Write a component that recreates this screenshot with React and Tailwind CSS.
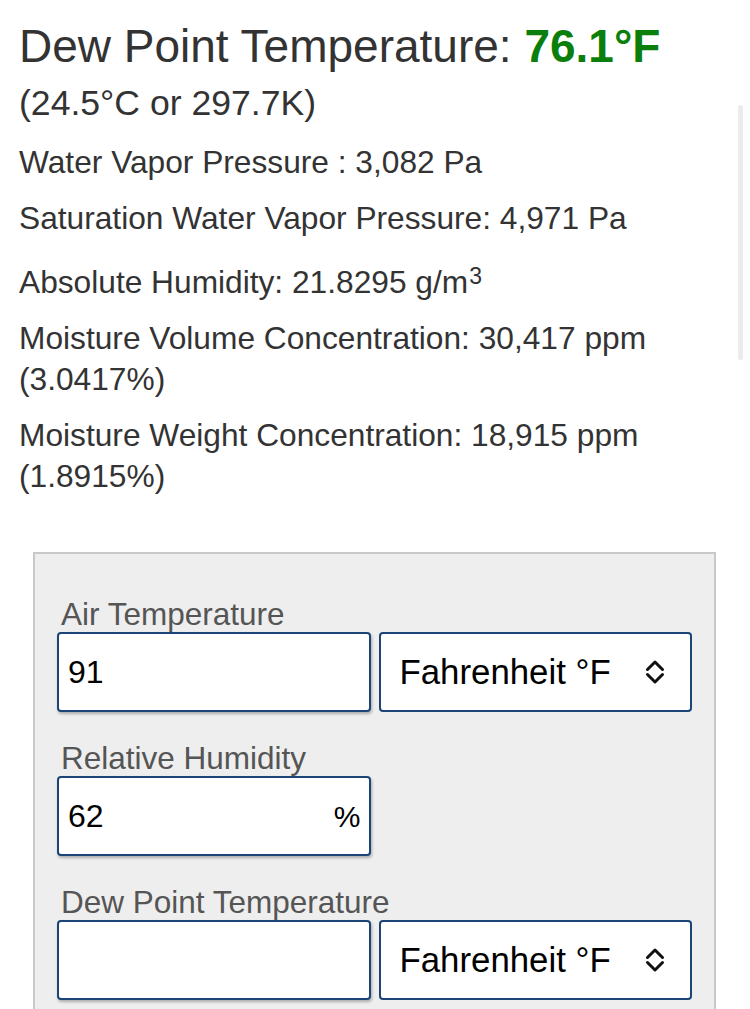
import React from "react";

function Chevrons() {
  return (
    <svg className="shrink-0" width="20" height="26" viewBox="0 0 20 26" fill="none" stroke="#111" strokeWidth="3" strokeLinecap="round" strokeLinejoin="round">
      <path d="M2.5 10.5 L10 3 L17.5 10.5" />
      <path d="M2.5 15.5 L10 23 L17.5 15.5" />
    </svg>
  );
}

function NumInput({ value, suffix }) {
  return (
    <div className="h-[80px] rounded-[4px] border-2 border-[#1b4577] bg-white shadow-[1px_2px_3px_rgba(0,0,0,0.28)] flex items-center pl-[9px] pr-[8px] text-[32px] text-black">
      <span className="flex-1">{value}</span>
      {suffix && <span className="text-[30px]">{suffix}</span>}
    </div>
  );
}

function SelectBox() {
  return (
    <div className="h-[80px] rounded-[4px] border-2 border-[#1b4577] bg-white flex items-center pl-[19px] pr-[25px] text-[34.8px] text-black">
      <span className="flex-1">Fahrenheit °F</span>
      <Chevrons />
    </div>
  );
}

function Label({ children }) {
  return (
    <div className="text-[31.5px] leading-[35px] text-[#555] pl-[4px]">{children}</div>
  );
}

export default function App() {
  return (
    <div className="relative min-h-[1009px] h-[1009px] overflow-hidden bg-white font-['Liberation_Sans',Arial,sans-serif] text-[#333]">
      <div className="px-[19px] pt-[20px]">
        <h1 className="text-[46px] leading-[52px] font-normal">
          Dew Point Temperature: <span className="font-bold text-[#0b7f0b]">76.1°F</span>
        </h1>
        <div className="mt-[10px] text-[35.6px] leading-[42px]">(24.5°C or 297.7K)</div>
        <div className="mt-[18px] text-[31.7px] leading-[41px]">
          <p>Water Vapor Pressure : 3,082 Pa</p>
          <p className="mt-[15px]">Saturation Water Vapor Pressure: 4,971 Pa</p>
          <p className="mt-[23px]">
            Absolute Humidity: 21.8295 g/m<sup className="text-[23px] leading-none align-baseline relative top-[-9px] ml-[1px]">3</sup>
          </p>
          <p className="mt-[15px]">Moisture Volume Concentration: 30,417 ppm (3.0417%)</p>
          <p className="mt-[15px]">Moisture Weight Concentration: 18,915 ppm (1.8915%)</p>
        </div>
      </div>

      <div className="ml-[33px] mt-[55px] w-[683px] border-2 border-[#c8c8c8] bg-[#eeeeee] px-[22px] pt-[43px] pb-[40px]">
        <Label>Air Temperature</Label>
        <div className="grid grid-cols-2 gap-[8px]">
          <NumInput value="91" />
          <SelectBox />
        </div>

        <div className="mt-[29px]">
          <Label>Relative Humidity</Label>
          <div className="grid grid-cols-2 gap-[8px]">
            <NumInput value="62" suffix="%" />
            <div />
          </div>
        </div>

        <div className="mt-[29px]">
          <Label>Dew Point Temperature</Label>
          <div className="grid grid-cols-2 gap-[8px]">
            <NumInput value="" />
            <SelectBox />
          </div>
        </div>
      </div>

      <div className="absolute right-[7px] top-[105px] w-[5px] h-[255px] rounded-full bg-[#ebebeb]" />
    </div>
  );
}
